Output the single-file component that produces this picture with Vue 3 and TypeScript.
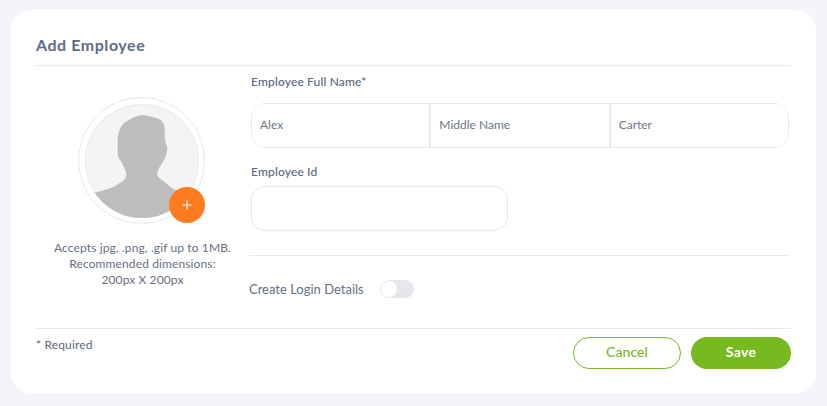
<script setup lang="ts">
import { ref } from 'vue';

const firstName = ref('Alex');
const middleName = ref('');
const lastName = ref('Carter');
const employeeId = ref('');
const createLogin = ref(false);
</script>

<template>
    <div class="page">
        <div class="card">
            <h1 class="title">Add Employee</h1>

            <div class="body">
                <!-- Photo column -->
                <div class="photo-col">
                    <div class="avatar-ring">
                        <div class="avatar">
                            <svg viewBox="0 0 115 115" class="silhouette">
                                <path d="M0 91 L11 89 C20 87 27 85 32 82 C36 79 41 77 41 74 C43 70 40 65 37 59 C35 56 33 54 33 50 L33 34 C34 27 36 22 40 19 C45 15 52 11 58 11 C62 11 66 13 72 14 C76 15 79 18 80 22 C81 27 80 32 81 37 C81 40 83 42 83 44 C83 48 82 51 81 54 C79 58 77 61 75 64 C74 67 72 70 73 72 C74 74 76 76 78 77 C82 80 85 83 88 85 C95 89 105 92 115 95 L115 115 L0 115 Z" fill="#bdbdbd" />
                            </svg>
                        </div>
                        <button class="add-photo" type="button" aria-label="Add photo">
                            <svg viewBox="0 0 12 12" width="12" height="12">
                                <path d="M6 1.5V10.5M1.5 6H10.5" stroke="#fff" stroke-width="1.2" fill="none" />
                            </svg>
                        </button>
                    </div>
                    <p class="hint">Accepts jpg, .png, .gif up to 1MB.<br />Recommended dimensions:<br />200px X 200px</p>
                </div>

                <!-- Form column -->
                <div class="form-col">
                    <label class="label">Employee Full Name*</label>
                    <div class="name-group">
                        <input v-model="firstName" class="name-input" placeholder="First Name" />
                        <input v-model="middleName" class="name-input" placeholder="Middle Name" />
                        <input v-model="lastName" class="name-input" placeholder="Last Name" />
                    </div>

                    <label class="label id-label">Employee Id</label>
                    <input v-model="employeeId" class="id-input" />

                    <div class="login-row">
                        <span class="login-text">Create Login Details</span>
                        <span class="toggle" :class="{ on: createLogin }" @click="createLogin = !createLogin">
                            <span class="knob"></span>
                        </span>
                    </div>
                </div>
            </div>

            <div class="footer">
                <span class="required">* Required</span>
                <div class="actions">
                    <button class="btn cancel" type="button">Cancel</button>
                    <button class="btn save" type="button">Save</button>
                </div>
            </div>
        </div>
    </div>
</template>

<style>
html, body {
    margin: 0;
    background: #f4f5fb;
}
</style>

<style scoped>
.page {
    width: 827px;
    height: 406px;
    padding: 10px 11px 13px;
    box-sizing: border-box;
    font-family: "Lato", "Open Sans", sans-serif;
    color: #5c677d;
}

.card {
    height: 383px;
    background: #fff;
    border-radius: 20px;
    padding: 0 25px;
    box-sizing: border-box;
}

.title {
    margin: 0;
    height: 56px;
    box-sizing: border-box;
    padding-top: 24px;
    line-height: 22px;
    font-size: 16px;
    font-weight: 700;
    color: #5f6b85;
    letter-spacing: 0.55px;
    border-bottom: 1px solid #e9eaee;
}

.body {
    display: flex;
    height: 263px;
    box-sizing: border-box;
    border-bottom: 1px solid #e9eaee;
}

.photo-col {
    width: 213px;
    display: flex;
    flex-direction: column;
    align-items: center;
    padding-top: 31px;
    box-sizing: border-box;
}

.avatar-ring {
    position: relative;
    width: 127px;
    height: 127px;
    margin-right: 2px;
    box-sizing: border-box;
    border: 1px solid #e9e9ec;
    border-radius: 50%;
    padding: 5.5px;
}

.avatar {
    width: 114px;
    height: 114px;
    border-radius: 50%;
    overflow: hidden;
    background: #f4f4f5;
    box-shadow: inset 0 0 0 1px #ececee;
}

.silhouette {
    display: block;
    width: 114px;
    height: 114px;
}

.add-photo {
    position: absolute;
    right: -1px;
    bottom: 0;
    width: 36px;
    height: 36px;
    padding: 0;
    border: none;
    border-radius: 50%;
    background: #ff7b1f;
    display: flex;
    align-items: center;
    justify-content: center;
}

.hint {
    margin: 16px 0 0;
    font-size: 12px;
    line-height: 16px;
    text-align: center;
    color: #656f82;
    letter-spacing: 0.12px;
}

.form-col {
    flex: 1;
    display: flex;
    flex-direction: column;
    align-items: flex-start;
    padding-top: 8px;
}

.label {
    margin-left: 2px;
    font-size: 12px;
    line-height: 16px;
    font-weight: 500;
    color: #5c677d;
    letter-spacing: 0.15px;
}

.name-group {
    margin: 13px 0 0 2px;
    width: 538px;
    height: 45px;
    display: flex;
    box-sizing: border-box;
    border: 1px solid #e9eaee;
    border-radius: 14px;
    overflow: hidden;
}

.name-input {
    flex: 1;
    min-width: 0;
    border: none;
    border-right: 2px solid #e9eaee;
    outline: none;
    padding: 0 8px 2px;
    font: inherit;
    font-size: 12px;
    color: #6d7583;
}

.name-input:last-child {
    border-right: none;
}

.name-input::placeholder {
    color: #6d7583;
    opacity: 1;
}

.id-label {
    margin-top: 16px;
}

.id-input {
    margin: 6px 0 0 2px;
    width: 257px;
    height: 45px;
    box-sizing: border-box;
    border: 1px solid #e9eaee;
    border-radius: 14px;
    outline: none;
}

.login-row {
    width: 541px;
    margin-top: 24px;
    padding-top: 24px;
    border-top: 1px solid #e9eaee;
    display: flex;
    align-items: center;
    gap: 16px;
}

.login-text {
    font-size: 13px;
    line-height: 18px;
    color: #656f82;
}

.toggle {
    position: relative;
    width: 34px;
    height: 18px;
    border-radius: 9px;
    background: #e6e7ee;
    cursor: pointer;
}

.knob {
    position: absolute;
    top: 1px;
    left: 1px;
    width: 16px;
    height: 16px;
    border-radius: 50%;
    background: #fff;
}

.toggle.on {
    background: #76b921;
}

.toggle.on .knob {
    left: 17px;
}

.footer {
    display: flex;
    justify-content: space-between;
    align-items: flex-start;
    padding-top: 8px;
}

.required {
    font-size: 12px;
    line-height: 16px;
    color: #5c677d;
    letter-spacing: 0.15px;
}

.actions {
    display: flex;
    gap: 10px;
}

.btn {
    height: 32px;
    padding: 0 0 3px;
    border-radius: 16px;
    font-family: inherit;
    font-size: 14px;
    cursor: pointer;
}

.cancel {
    width: 108px;
    background: #fff;
    border: 1px solid #76b921;
    color: #76b921;
    font-weight: 500;
    letter-spacing: 0.1px;
}

.save {
    width: 100px;
    background: #76b921;
    border: none;
    color: #fff;
    font-weight: 700;
    letter-spacing: 0.35px;
}
</style>
